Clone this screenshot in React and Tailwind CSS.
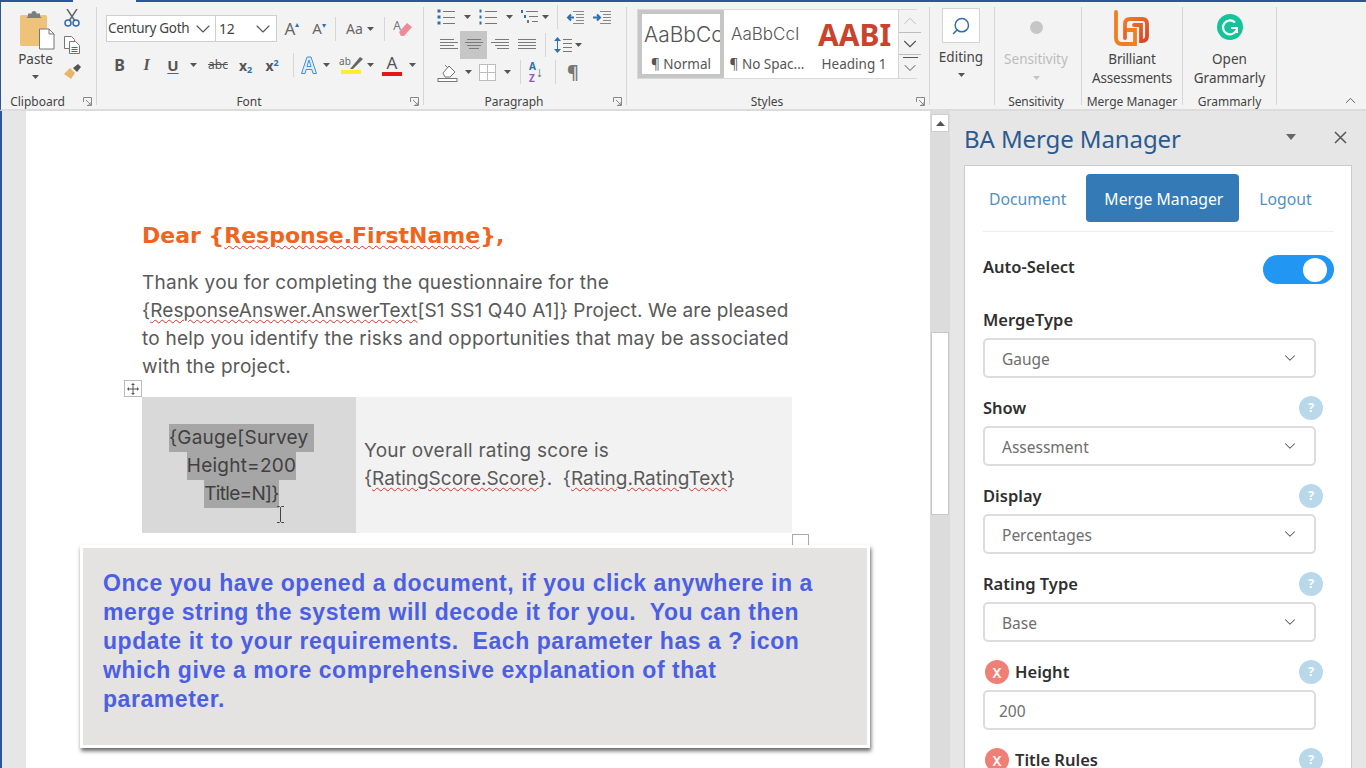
import React from "react";
import { ChevronDown, ChevronUp, Search } from "lucide-react";

const Caret = ({ c = "#555" }) => (
  <svg width="7" height="4" viewBox="0 0 7 4" className="shrink-0"><path d="M0 0h7L3.5 4z" fill={c} /></svg>
);

const Launcher = () => (
  <svg width="9" height="9" viewBox="0 0 9 9" fill="none" stroke="#888"><path d="M.5 5V.5h8v8H4" /><path d="M3 3l5 5M8 5v3H5" /></svg>
);

const Sep = ({ cls }) => <div className={"w-px bg-[#d6d6d6] shrink-0 " + cls} />;

const Group = ({ w, label, launcher, children }) => (
  <div className={"flex shrink-0 " + w}>
    <div className="flex-1 flex flex-col min-w-0">
      <div className="h-[87px]">{children}</div>
      <div className="relative h-[15px] flex items-center justify-center text-[12px] leading-[15px] text-[#444] whitespace-nowrap">
        {label}
        {launcher && <div className="absolute right-[4px] top-[3px]"><Launcher /></div>}
      </div>
    </div>
    <div className="w-px h-[98px] bg-[#d6d6d6]" />
  </div>
);

const Lines = ({ rows }) => (
  <svg width="18" height="14" viewBox="0 0 18 14" stroke="#7a7a7a" strokeWidth="1">
    {rows.map((r, i) => <path key={i} d={`M${r[0]} ${i * 3 + 1}.5H${r[1]}`} />)}
  </svg>
);

const Bullets = ({ num }) => (
  <svg width="19" height="16" viewBox="0 0 19 16">
    {[2, 8, 14].map((y) => (
      <g key={y}>
        <rect x="0.5" y={y - 1.5} width={num ? 2 : 3} height="3" fill="#2f6fb0" />
        <path d={`M6 ${y}.5H18`} stroke="#777" />
      </g>
    ))}
  </svg>
);

const Multi = () => (
  <svg width="18" height="16" viewBox="0 0 18 16">
    <rect x="0" y="1" width="2" height="3" fill="#2f6fb0" />
    <path d="M5 2.5H17" stroke="#777" />
    <rect x="3" y="6" width="2" height="3" fill="#2f6fb0" />
    <path d="M8 7.5H17" stroke="#777" />
    <rect x="6" y="11" width="2" height="3" fill="#777" />
    <path d="M11 12.5H17" stroke="#777" />
  </svg>
);

const Indent = ({ inc }) => (
  <svg width="18" height="15" viewBox="0 0 18 15">
    <path d="M7 1.5H18M10 4.5H18M10 7.5H18M10 10.5H18M7 13.5H18" stroke="#888" />
    {inc ? <path d="M0 7.5H6M4 4.5l3 3-3 3" stroke="#2f6fb0" strokeWidth="2" fill="none" /> : <path d="M8 7.5H2M5 4.5l-3 3 3 3" stroke="#2f6fb0" strokeWidth="2" fill="none" />}
  </svg>
);

const StyleItem = ({ w, sel, big, small, sample }) => (
  <div className={"flex flex-col items-center overflow-hidden shrink-0 h-full " + w + (sel ? " border-4 border-[#c6c6c6]" : " border-4 border-white")}>
    <div className={"h-[41px] shrink-0 flex items-center w-full whitespace-nowrap overflow-hidden " + big}>{sample}</div>
    <div className="text-[13.5px] leading-[18px] text-[#555] whitespace-nowrap">{small}</div>
  </div>
);

const Help = () => (
  <div className="w-[24px] h-[24px] rounded-full bg-[#b9d9eb] text-white text-[13px] font-bold flex items-center justify-center mr-[5px] shrink-0">?</div>
);

const Remove = () => (
  <div className="w-[24px] h-[24px] ml-[2px] mr-[6px] rounded-full bg-[#f07f75] text-white text-[14px] flex items-center justify-center shrink-0">X</div>
);

const Field = ({ label, help, remove, value, input }) => (
  <div className="w-[351px] mb-[20px]">
    <div className="h-[28px] pb-[8px] flex items-center justify-between">
      <div className="flex items-center text-[16.5px] font-semibold text-[#2f2f2f] whitespace-nowrap">
        {remove && <Remove />}
        {label}
      </div>
      {help && <div className="mr-[6px]"><Help /></div>}
    </div>
    <div className={"w-[333px] h-[40px] border-2 border-[#dcdcdc] rounded-[5px] bg-white flex items-center justify-between text-[15.5px] text-[#6e6e6e] " + (input ? "pl-[14px]" : "pl-[17px] pr-[15px]")}>
      <span className="pt-[3px]">{value}</span>
      {!input && <ChevronDown size={18} strokeWidth={1.4} color="#555" />}
    </div>
  </div>
);

const Wavy = ({ children }) => (
  <span className="underline decoration-wavy decoration-[#d9342b] decoration-1 underline-offset-[2px]">{children}</span>
);

export default function App() {
  return (
    <div className="w-[1366px] h-[768px] overflow-hidden flex flex-col bg-white font-['Noto_Sans',sans-serif]">
      {/* title strip remainder */}
      <div className="h-[2px] flex shrink-0">
        <div className="w-[73px] bg-[#2b579a]" />
        <div className="w-[63px] bg-[#f3f3f3]" />
        <div className="flex-1 bg-[#2b579a]" />
      </div>

      {/* ribbon */}
      <div className="h-[109px] shrink-0 flex items-start pt-[5px] bg-[#f3f3f3] border-b-2 border-[#dcdcdc] border-l border-l-[#2b579a]">
        {/* Clipboard */}
        <Group w="w-[96px]" label={<span className="mr-[22px]">Clipboard</span>} launcher>
          <div className="flex h-full">
            <div className="w-[61px] pl-[8px] flex flex-col items-center">
              <svg width="36" height="40" viewBox="0 0 36 40" className="mt-[3px] ml-[2px]">
                <rect x="1" y="5" width="27" height="31" rx="1.5" fill="#efc27a" />
                <path d="M9 6V3.5h3.5a2.5 2.5 0 0 1 5 0H21V6l1.5 2h-15z" fill="#7d7d7d" />
                <path d="M20.5 19H30l5 5v15H20.5z" fill="#fff" stroke="#777" />
                <path d="M30 19v5h5" fill="none" stroke="#777" />
              </svg>
              <div className="text-[13.5px] leading-[18px] text-[#444]">Paste</div>
              <div className="mt-[7px]"><Caret /></div>
            </div>
            <div className="w-[20px] flex flex-col items-center">
              <svg width="16" height="18" viewBox="0 0 16 18" className="mt-[2px]" fill="none">
                <path d="M3 0l8 12M13 0L5 12" stroke="#666" strokeWidth="1.5" />
                <circle cx="4" cy="14" r="3" stroke="#2f6fb0" strokeWidth="1.5" />
                <circle cx="12" cy="14" r="3" stroke="#2f6fb0" strokeWidth="1.5" />
              </svg>
              <svg width="18" height="18" viewBox="0 0 18 18" className="mt-[9px]" fill="#fff" stroke="#777">
                <path d="M1.5.5h7l3 3v9h-10z" />
                <path d="M6.5 5.5h6l4 4v8h-10z" />
                <path d="M8.5 11.5h6M8.5 13.5h6M8.5 15.5h6" stroke="#2f6fb0" />
              </svg>
              <svg width="18" height="16" viewBox="0 0 18 16" className="mt-[10px]">
                <path d="M1 10l6-6 5 5-4 6z" fill="#e6b566" />
                <path d="M10 4l5-4 3 3-4 5z" fill="#555" />
              </svg>
            </div>
          </div>
        </Group>

        {/* Font */}
        <Group w="w-[327px]" label={<span className="mr-[22px]">Font</span>} launcher>
          <div className="pl-[9px] pt-[8px]">
            <div className="flex items-center h-[27px]">
              <div className="flex h-full w-[171px] shrink-0 bg-white border border-[#cfcfcf] text-[13.5px] tracking-[-0.3px] text-[#444]">
                <div className="w-[109px] flex items-center justify-between pl-[1px] border-r border-[#cfcfcf] whitespace-nowrap overflow-hidden">
                  Century Goth
                  <ChevronDown size={24} strokeWidth={1.1} color="#555" className="shrink-0" />
                </div>
                <div className="flex-1 flex items-center justify-between pl-[3px] pr-[1px] text-[14px]">
                  12
                  <ChevronDown size={24} strokeWidth={1.1} color="#555" />
                </div>
              </div>
              <div className="w-[28px] ml-px flex justify-center text-[17px] text-[#666] leading-none">A<span className="text-[8px] text-[#2f6fb0]">▴</span></div>
              <div className="w-[26px] flex justify-center text-[15px] text-[#666] leading-none">A<span className="text-[8px] text-[#2f6fb0]">▾</span></div>
              <Sep cls="h-[24px] ml-[3px]" />
              <div className="w-[48px] flex items-center justify-center gap-[4px] text-[14px] text-[#666]">Aa<Caret /></div>
              <Sep cls="h-[24px]" />
              <div className="w-[36px] flex justify-center items-start text-[12px] leading-[14px] text-[#777]">
                A
                <svg width="15" height="15" viewBox="0 0 15 15" className="-ml-[3px] mt-[4px]">
                  <path d="M1 9l8-9 5 4-8 9H3z" fill="#ef8a9a" />
                </svg>
              </div>
            </div>
            <div className="flex items-center h-[28px] mt-[9px] text-[#555]">
              <div className="w-[27px] text-center font-bold text-[16px]">B</div>
              <div className="w-[27px] text-center italic font-bold text-[16px] font-['Liberation_Serif']">I</div>
              <div className="w-[26px] text-center font-bold text-[15px] underline underline-offset-2 decoration-[#2f6fb0]">U</div>
              <div className="w-[14px] ml-[4px]"><Caret /></div>
              <div className="w-[28px] text-center text-[12px] line-through">abc</div>
              <div className="w-[27px] text-center font-bold text-[14px]">x<sub className="text-[9px] text-[#2f6fb0]">2</sub></div>
              <div className="w-[26px] text-center font-bold text-[14px]">x<sup className="text-[9px] text-[#2f6fb0]">2</sup></div>
              <Sep cls="h-[24px] ml-[8px]" />
              <div className="w-[28px] ml-[1px] flex justify-center">
                <svg width="18" height="20" viewBox="0 0 18 20"><path d="M1.5 18.5L7 2h4l5.5 16.500h-3.500l-1.200-4H6.200l-1.200 4zM7 11.500h4L9 5z" fill="#dcebf7" stroke="#4a90d0" /></svg>
              </div>
              <div className="w-[14px]"><Caret /></div>
              <div className="w-[28px] flex flex-col items-center leading-none">
                <div className="flex items-start h-[14px] text-[10px] leading-[10px] text-[#666]">
                  ab
                  <svg width="13" height="13" viewBox="0 0 13 13" className="-ml-[1px]"><path d="M0 13L10 1l3 2L3 13z" fill="#666" /></svg>
                </div>
                <div className="w-[20px] h-[4px] bg-[#ffee2e]" />
              </div>
              <div className="w-[12px] ml-[2px]"><Caret /></div>
              <div className="w-[26px] flex flex-col items-center leading-none">
                <div className="text-[17px] leading-[16px] text-[#555]">A</div>
                <div className="w-[20px] h-[4px] bg-[#e81414] mt-[1px]" />
              </div>
              <div className="w-[14px] ml-[4px]"><Caret /></div>
            </div>
          </div>
        </Group>

        {/* Paragraph */}
        <Group w="w-[203px]" label={<span className="mr-[22px]">Paragraph</span>} launcher>
          <div className="pl-[13px]">
            <div className="flex items-center h-[20px]">
              <Bullets />
              <div className="ml-[8px]"><Caret /></div>
              <div className="ml-[8px]"><Bullets num /></div>
              <div className="ml-[8px]"><Caret /></div>
              <div className="ml-[8px]"><Multi /></div>
              <div className="ml-[3px]"><Caret /></div>
              <Sep cls="h-[24px] ml-[8px]" />
              <div className="ml-[8px]"><Indent /></div>
              <div className="ml-[9px]"><Indent inc /></div>
            </div>
            <div className="flex items-center h-[28px] mt-[4px]">
              <div className="w-[23px] flex justify-center"><Lines rows={[[0, 14], [0, 18], [0, 14], [0, 18]]} /></div>
              <div className="w-[27px] h-[28px] bg-[#c6c6c6] flex items-center justify-center"><Lines rows={[[2, 16], [0, 18], [2, 16], [4, 14]]} /></div>
              <div className="w-[25px] flex justify-center"><Lines rows={[[4, 18], [0, 18], [4, 18], [6, 18]]} /></div>
              <div className="w-[30px] flex justify-center"><Lines rows={[[0, 18], [0, 18], [0, 18], [0, 18]]} /></div>
              <Sep cls="h-[24px] ml-[3px]" />
              <div className="ml-[8px]">
                <svg width="18" height="18" viewBox="0 0 18 18">
                  <path d="M3.500 1L0 5h7zM3.500 17L0 13h7z" fill="#2f6fb0" />
                  <path d="M3.500 5v8" stroke="#2f6fb0" />
                  <path d="M9 3.500h9M9 7.500h9M9 11.500h9M9 15.500h9" stroke="#777" />
                </svg>
              </div>
              <div className="ml-[3px]"><Caret /></div>
            </div>
            <div className="flex items-center h-[26px]">
              <svg width="21" height="19" viewBox="0 0 21 19" fill="none">
                <path d="M6 10l6-7 6 6-5 5H8z" fill="#fff" stroke="#777" />
                <path d="M8 2l3 3" stroke="#777" />
                <rect x="1" y="15.500" width="19" height="3" fill="#fff" stroke="#777" />
              </svg>
              <div className="ml-[7px]"><Caret /></div>
              <div className="ml-[7px]">
                <svg width="17" height="17" viewBox="0 0 17 17" fill="#fff" stroke="#bdbdbd"><rect x=".5" y=".5" width="16" height="16" /><path d="M8.500 .5v16M.5 8.500h16" /></svg>
              </div>
              <div className="ml-[8px]"><Caret /></div>
              <Sep cls="h-[24px] ml-[9px]" />
              <div className="ml-[8px] w-[20px] flex items-center text-[10px] leading-[12px] font-bold">
                <div className="flex flex-col"><span className="text-[#2f6fb0]">A</span><span className="text-[#8a5ac2]">Z</span></div>
                <span className="text-[14px] leading-[20px] text-[#666] font-normal">↓</span>
              </div>
              <Sep cls="h-[24px] ml-[6px]" />
              <div className="ml-[11px] text-[18px] font-bold text-[#777] leading-none">¶</div>
            </div>
          </div>
        </Group>

        {/* Styles */}
        <Group w="w-[303px]" label={<span className="mr-[22px]">Styles</span>} launcher>
          <div className="ml-[10px] mt-[2px] w-[280px] h-[70px] flex bg-white border border-[#d9d9d9]">
            <StyleItem w="w-[86px]" sel big="text-[21px] font-['Inter'] font-light text-[#555] pl-[2px]" small="¶ Normal" sample="AaBbCc" />
            <StyleItem w="w-[86px]" big="text-[17px] font-['Inter'] font-light text-[#555] pl-[3px]" small="¶ No Spac..." sample="AaBbCcI" />
            <StyleItem w="w-[88px]" big="text-[30px] font-bold text-[#c8442c] pl-[4px]" small="Heading 1" sample="AABI" />
            <div className="flex-1 flex flex-col border-l border-[#d4d4d4] bg-[#f3f3f3]">
              <div className="h-[23px] flex items-center justify-center border-b border-[#bdbdbd]"><ChevronUp size={22} strokeWidth={1} color="#bbb" /></div>
              <div className="h-[22px] flex items-center justify-center border-b border-[#bdbdbd]"><ChevronDown size={22} strokeWidth={1.2} color="#555" /></div>
              <div className="flex-1 flex flex-col items-center pt-[2px]"><div className="w-[15px] h-px bg-[#555]" /><ChevronDown size={20} strokeWidth={1.2} color="#555" /></div>
            </div>
          </div>
        </Group>

        {/* Editing */}
        <Group w="w-[65px]" label="">
          <div className="flex flex-col items-center pr-[2px]">
            <div className="w-[38px] h-[35px] mt-[1px] bg-white border border-[#d4d4d4] flex items-center justify-center">
              <Search size={20} strokeWidth={1.8} color="#2f6fb0" className="-scale-x-100" />
            </div>
            <div className="text-[13.5px] leading-[18px] text-[#444] mt-[5px]">Editing</div>
            <div className="mt-[7px]"><Caret /></div>
          </div>
        </Group>

        {/* Sensitivity */}
        <Group w="w-[87px]" label={<span className="mr-[4px] tracking-[-0.1px]">Sensitivity</span>}>
          <div className="flex flex-col items-center pr-[4px]">
            <div className="w-[13px] h-[13px] rounded-full bg-[#c6c6c6] mt-[14px]" />
            <div className="text-[13.5px] leading-[18px] text-[#bcbcbc] mt-[16px]">Sensitivity</div>
            <div className="mt-[8px]"><Caret c="#c4c4c4" /></div>
          </div>
        </Group>

        {/* Merge Manager */}
        <Group w="w-[101px]" label="Merge Manager">
          <div className="flex flex-col items-center">
            <svg width="36" height="36" viewBox="0 0 36 36" fill="none" className="mt-[3px] -ml-[2px]" strokeLinecap="round">
              <defs>
                <linearGradient id="ba" x1="0" y1="0" x2="1" y2="1">
                  <stop offset="0" stopColor="#f47a22" />
                  <stop offset="1" stopColor="#d9432b" />
                </linearGradient>
              </defs>
              <path d="M3 2V28Q3 34 9 34H22V20H13" stroke="#f17f22" strokeWidth="3.800" />
              <path d="M12 28V14Q12 9 17 9H29Q34 9 34 14V26Q34 31 29 31H28V15H21" stroke="url(#ba)" strokeWidth="3.800" />
            </svg>
            <div className="text-[13.5px] tracking-[-0.2px] leading-[19px] text-[#444] mt-[4px] text-center whitespace-nowrap">Brilliant<br />Assessments</div>
          </div>
        </Group>

        {/* Grammarly */}
        <Group w="w-[94px]" label="Grammarly">
          <div className="flex flex-col items-center">
            <svg width="26" height="26" viewBox="0 0 26 26" className="mt-[7px]" fill="none" stroke="#fff">
              <circle cx="13" cy="13" r="13" fill="#15c39a" stroke="none" />
              <path d="M18 8.500A7 7 0 1 0 19.500 16" strokeWidth="2.200" />
              <path d="M14 14h6v5" strokeWidth="2" />
            </svg>
            <div className="text-[13.5px] leading-[19px] text-[#444] mt-[10px] text-center">Open<br />Grammarly</div>
          </div>
        </Group>

        <div className="flex-1 h-[102px] flex items-end justify-end pr-[7px]">
          <ChevronUp size={17} strokeWidth={1.3} color="#555" />
        </div>
      </div>

      {/* body */}
      <div className="flex-1 min-h-0 flex">
        <div className="w-[26px] shrink-0 bg-[#e6e6e6] border-l-2 border-[#2b579a]" />

        {/* document */}
        <div className="relative w-[904px] shrink-0 bg-white pl-[116px] pt-[111px] overflow-hidden">
          <div className="h-[28px] leading-[28px] text-[22px] font-bold text-[#f0641e] font-['DejaVu_Sans'] whitespace-nowrap">
            Dear {"{"}<Wavy>Response.FirstName</Wavy>{"}"},
          </div>
          <div className="mt-[19px] text-[19px] leading-[28px] text-[#595959] font-['Inter'] whitespace-nowrap tracking-[0.24px]">
            <div>Thank you for completing the questionnaire for the</div>
            <div className="tracking-[0.09px]">{"{"}<Wavy>ResponseAnswer.AnswerText</Wavy>[S1 SS1 Q40 A1]{"}"} Project. We are pleased</div>
            <div>to help you identify the risks and opportunities that may be associated</div>
            <div>with the project.</div>
          </div>

          <div className="relative mt-[16px] w-[650px] h-[136px] flex text-[19px] leading-[28px] text-[#595959] font-['Inter'] tracking-[0.24px]">
            <div className="absolute -left-[18px] -top-[17px] w-[18px] h-[17px] border border-[#bbb] bg-white flex items-center justify-center">
              <svg width="12" height="12" viewBox="0 0 12 12" stroke="#555" fill="#555"><path d="M6 1v10M1 6h10" /><path d="M6 0l2 2H4zM6 12l2-2H4zM0 6l2-2v4zM12 6l-2-2v4z" stroke="none" /></svg>
            </div>
            <div className="w-[214px] h-full bg-[#d9d9d9] pr-[15px] pt-[1px] text-center flex flex-col justify-center text-[#404040] whitespace-nowrap">
              <div><span className="bg-[#a6a6a6] inline-block">{"{Gauge[Survey"}&nbsp;</span></div>
              <div><span className="bg-[#a6a6a6] inline-block">Height=200</span></div>
              <div><span className="bg-[#a6a6a6] inline-block tracking-[-0.7px]">{"Title=N]}"}</span></div>
            </div>
            <div className="flex-1 h-full bg-[#f2f2f2] pl-[8px] flex flex-col justify-center whitespace-nowrap">
              <div>Your overall rating score is</div>
              <div className="tracking-[0px]">{"{"}<Wavy>RatingScore.Score</Wavy>{"}"}.&nbsp; {"{"}<Wavy>Rating.RatingText</Wavy>{"}"}</div>
            </div>
            <svg width="9" height="17" viewBox="0 0 9 17" className="absolute left-[134px] top-[109px]" fill="none" stroke="#444"><path d="M1 .5h2.500L4.500 1.500 5.500 .5H8M4.500 1.500v14M1 16.500h2.500l1-1 1 1H8" /></svg>
            <div className="absolute left-[650px] top-[137px] w-[17px] h-[17px] border border-[#aaa] bg-white" />
          </div>

          {/* callout */}
          <div className="absolute left-[54px] top-[434px] w-[790px] h-[203px] bg-[#e5e2e2] border-[3px] border-white shadow-[1px_3px_4px_rgba(0,0,0,0.6)] pl-[20px] pt-[21px] text-[23px] leading-[29px] font-bold text-[#4a5fe3] font-['Liberation_Sans'] whitespace-pre tracking-[0.55px]">
            {"Once you have opened a document, if you click anywhere in a\nmerge string the system will decode it for you.  You can then\nupdate it to your requirements.  Each parameter has a ? icon\nwhich give a more comprehensive explanation of that\nparameter."}
          </div>
        </div>

        {/* scrollbar */}
        <div className="w-[20px] shrink-0 bg-[#dcdcdc] pl-px">
          <div className="w-[18px] h-[18px] mt-[3px] bg-white border border-[#cfcfcf] flex items-center justify-center">
            <svg width="9" height="5" viewBox="0 0 9 5"><path d="M0 5h9L4.500 0z" fill="#555" /></svg>
          </div>
          <div className="w-[18px] h-[183px] mt-[200px] bg-white border border-[#c8c8c8]" />
        </div>

        {/* task pane */}
        <div className="flex-1 min-w-0 flex flex-col bg-[#e6e6e6] pl-[14px] pr-[14px] font-['Noto_Sans']">
          <div className="h-[54px] shrink-0 flex items-center justify-between">
            <div className="text-[24px] leading-[30px] tracking-[-0.1px] text-[#2b5a8f] whitespace-nowrap mt-[2px]">BA Merge Manager</div>
            <div className="flex items-center -mt-[2px] mr-[4px]">
              <svg width="10" height="6" viewBox="0 0 10 6"><path d="M0 0h10L5 6z" fill="#666" /></svg>
              <svg width="13" height="13" viewBox="0 0 13 13" className="ml-[38px] mr-[1px]" stroke="#555" strokeWidth="1.500"><path d="M1 1l11 11M12 1L1 12" /></svg>
            </div>
          </div>
          <div className="flex-1 min-h-0 bg-white border border-[#cccccc] border-b-0 pl-[18px] overflow-hidden">
            <div className="w-[351px] h-[66px] border-b border-[#eeeeee] pt-[8px]">
              <div className="flex items-center gap-[2px] h-[48px] -ml-[12px] text-[15.75px] whitespace-nowrap">
                <div className="px-[18px] pt-[3px] text-[#4f8fc4]">Document</div>
                <div className="h-full pl-[18px] pr-[16px] pt-[3px] flex items-center rounded-[4px] bg-[#337ab7] text-white">Merge Manager</div>
                <div className="px-[18px] pt-[3px] text-[#4f8fc4]">Logout</div>
              </div>
            </div>
            <div className="w-[351px] h-[29px] mt-[23px] mb-[26px] flex items-center justify-between">
              <div className="text-[16.500px] font-semibold text-[#2f2f2f] -mt-[4px]">Auto-Select</div>
              <div className="w-[71px] h-[29px] rounded-full bg-[#2196f3] flex items-center justify-end pr-[7px]">
                <div className="w-[24px] h-[24px] rounded-full bg-white" />
              </div>
            </div>
            <Field label="MergeType" value="Gauge" />
            <Field label="Show" help value="Assessment" />
            <Field label="Display" help value="Percentages" />
            <Field label="Rating Type" help value="Base" />
            <Field label="Height" help remove value="200" input />
            <Field label="Title Rules" help remove value="" />
          </div>
        </div>
      </div>
    </div>
  );
}
